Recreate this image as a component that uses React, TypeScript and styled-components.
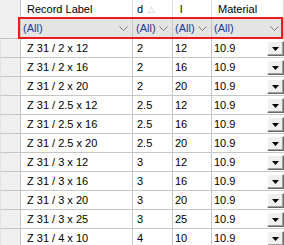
import React from 'react';
import styled, { createGlobalStyle } from 'styled-components';

const GlobalStyle = createGlobalStyle`
  html, body {
    margin: 0;
    padding: 0;
    background: #ffffff;
  }
  body {
    font-family: "Liberation Sans", Arial, sans-serif;
    font-size: 11px;
    color: #000;
  }
`;

const COLS = '21px 112px 40px 39px 72px';

const Grid = styled.div`
  width: 284px;
  height: 245px;
  overflow: hidden;
  background: #ffffff;
  position: relative;
`;

const Top = styled.div`
  display: grid;
  grid-template-columns: ${COLS};
  grid-template-rows: 18px 21px;
  position: relative;

  &::after {
    content: '';
    position: absolute;
    left: 18px;
    top: 17px;
    width: 261px;
    height: 18px;
    border: 2px solid #f01818;
    pointer-events: none;
  }
`;

const Corner = styled.div`
  grid-row: 1 / span 2;
  background: #f0f0f0;
  border-right: 1px solid #c6c6c6;
  border-bottom: 1px solid #c6c6c6;
`;

const HeadCell = styled.div<{ $pad: number }>`
  display: flex;
  align-items: center;
  gap: 5px;
  padding-left: ${(p) => p.$pad}px;
  background: #ffffff;
  border-right: 1px solid #dadada;
  border-bottom: 1px solid #c6c6c6;
  white-space: nowrap;
`;

const SortMark = styled.span`
  color: #c8c8c8;
  font-size: 9px;
`;

const FilterCell = styled.div<{ $pad: number }>`
  display: flex;
  align-items: center;
  justify-content: space-between;
  padding: 0 4px 0 ${(p) => p.$pad}px;
  background: #e4e4e4;
  border-right: 1px solid #c6c6c6;
  border-bottom: 1px solid #c6c6c6;
  color: #23399a;
`;

const Chevron = () => (
  <svg width="9" height="5" viewBox="0 0 9 5">
    <path d="M0.5 0.5 L4.5 4.5 L8.5 0.5" fill="none" stroke="#7a7a7a" strokeWidth="1" />
  </svg>
);

const Row = styled.div`
  display: grid;
  grid-template-columns: ${COLS};
  height: 19px;
`;

const RowHead = styled.div`
  background: #f0f0f0;
  border-left: 1px solid #e4e4e4;
  border-right: 1px solid #c6c6c6;
  border-bottom: 1px solid #c6c6c6;
`;

const Cell = styled.div<{ $pad: number }>`
  display: flex;
  align-items: center;
  padding-left: ${(p) => p.$pad}px;
  border-right: 1px solid #c6c6c6;
  border-bottom: 1px solid #c6c6c6;
  white-space: nowrap;
  position: relative;
`;

const ComboCell = styled(Cell)`
  justify-content: space-between;
  padding-right: 0;
  border-right: none;
`;

const DropButton = styled.div`
  width: 17px;
  height: 15px;
  box-sizing: border-box;
  background: #f0f0f0;
  border-top: 1px solid #ffffff;
  border-left: 1px solid #ffffff;
  border-right: 1px solid #6a6a6a;
  border-bottom: 1px solid #6a6a6a;
  box-shadow: inset -1px -1px 0 #a0a0a0;
  display: flex;
  align-items: center;
  justify-content: center;
  align-self: flex-end;
  margin-bottom: 1px;
`;

const Arrow = () => (
  <svg width="7" height="4" viewBox="0 0 7 4">
    <path d="M0 0 H7 L3.5 4 Z" fill="#000" />
  </svg>
);

const rows: [string, string, string][] = [
  ['Z 31 / 2 x 12', '2', '12'],
  ['Z 31 / 2 x 16', '2', '16'],
  ['Z 31 / 2 x 20', '2', '20'],
  ['Z 31 / 2.5 x 12', '2.5', '12'],
  ['Z 31 / 2.5 x 16', '2.5', '16'],
  ['Z 31 / 2.5 x 20', '2.5', '20'],
  ['Z 31 / 3 x 12', '3', '12'],
  ['Z 31 / 3 x 16', '3', '16'],
  ['Z 31 / 3 x 20', '3', '20'],
  ['Z 31 / 3 x 25', '3', '25'],
  ['Z 31 / 4 x 10', '4', '10'],
];

export default function App() {
  return (
    <>
      <GlobalStyle />
      <Grid>
        <Top>
          <Corner />
          <HeadCell $pad={6}>Record Label</HeadCell>
          <HeadCell $pad={4}>
            d <SortMark>△</SortMark>
          </HeadCell>
          <HeadCell $pad={7}>l</HeadCell>
          <HeadCell $pad={6}>Material</HeadCell>
          <FilterCell $pad={2}>(All)<Chevron /></FilterCell>
          <FilterCell $pad={3}>(All)<Chevron /></FilterCell>
          <FilterCell $pad={2}>(All)<Chevron /></FilterCell>
          <FilterCell $pad={2}>(All)<Chevron /></FilterCell>
        </Top>
        {rows.map(([label, d, l]) => (
          <Row key={label}>
            <RowHead />
            <Cell $pad={6}>{label}</Cell>
            <Cell $pad={4}>{d}</Cell>
            <Cell $pad={2}>{l}</Cell>
            <ComboCell $pad={2}>
              10.9
              <DropButton>
                <Arrow />
              </DropButton>
            </ComboCell>
          </Row>
        ))}
      </Grid>
    </>
  );
}
